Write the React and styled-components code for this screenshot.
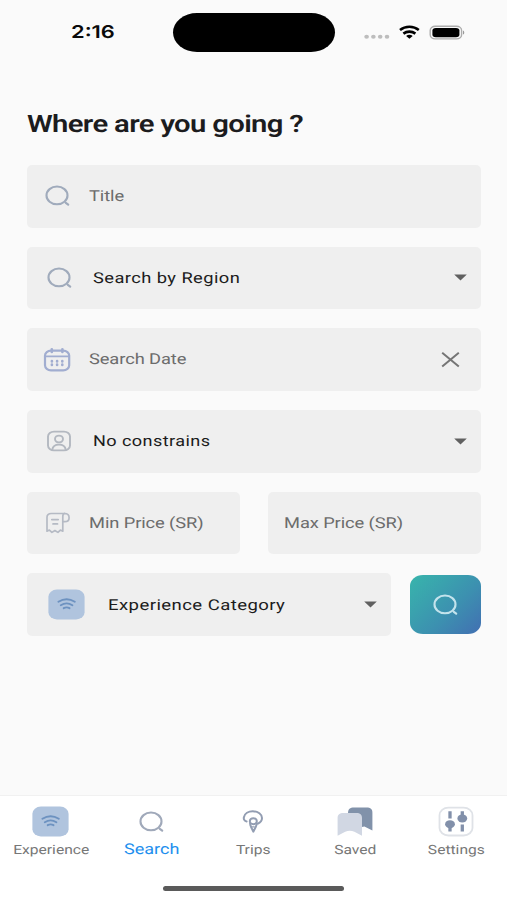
import styled, { createGlobalStyle } from "styled-components";

const GlobalStyle = createGlobalStyle`
  * {
    box-sizing: border-box;
  }
  body {
    margin: 0;
    background: #fafafa;
    font-family: Roboto, "Liberation Sans", sans-serif;
    text-rendering: geometricPrecision;
  }
`;

const Screen = styled.div`
  display: flex;
  flex-direction: column;
  width: 507px;
  height: 900px;
  overflow: hidden;
  background: #fafafa;
`;

const StatusBar = styled.header`
  display: grid;
  grid-template-columns: 173px 162px 1fr;
  height: 64px;
  padding-top: 12.5px;
`;

const Time = styled.div`
  padding-left: 71px;
  line-height: 39px;
  font-family: Inter, sans-serif;
  font-size: 17.5px;
  font-weight: 600;
  color: #0a0a0a;
`;

const Island = styled.div`
  height: 39px;
  border-radius: 24px / 19.5px;
  background: #000;
`;

const StatusIcons = styled.div`
  display: flex;
  padding: 11px 0 0 28px;
`;

const Stretch = styled.span`
  display: inline-block;
  white-space: nowrap;
  transform: scaleX(${(props) => props.$x || 1.22});
  transform-origin: ${(props) => (props.$center ? "center" : "left")};
`;

const Main = styled.main`
  flex: 1;
  padding: 0 26px 0 27px;
`;

const Heading = styled.h1`
  margin: 45px 0 25px;
  height: 31px;
  line-height: 31px;
  font-size: 24px;
  font-weight: 600;
  letter-spacing: -0.55px;
  color: #1c1c1e;
`;

const Form = styled.form`
  display: flex;
  flex-direction: column;
  gap: 19.2px;
`;

const Row = styled.div`
  display: grid;
  grid-template-columns: ${(props) => props.$columns};
  column-gap: ${(props) => props.$gap};
  align-items: center;
`;

const Field = styled.div`
  display: flex;
  align-items: center;
  height: 62.5px;
  padding: 0 ${(props) => props.$end || "14px"} 0 ${(props) => props.$start || "16px"};
  border-radius: 5px;
  background: #efefef;
  font-size: 15px;
  letter-spacing: ${(props) => (props.$dark ? "0.35px" : "-0.08px")};
  color: ${(props) => (props.$dark ? "#1c1c1c" : "#6c6c6c")};
  svg {
    flex: none;
  }
`;

const IconSlot = styled.span`
  display: flex;
  flex: none;
  width: ${(props) => props.$width || "46px"};
`;

const Value = styled.span`
  flex: 1;
  min-width: 0;
  line-height: 20px;
  padding-bottom: ${(props) => props.$lift || "1px"};
`;

const SearchButton = styled.button`
  display: flex;
  align-items: center;
  justify-content: center;
  height: 58.5px;
  padding: 0;
  border: 0;
  border-radius: 13px / 11px;
  background: linear-gradient(135deg, #38b2ac 5%, #3c91b0 58%, #426fb2 100%);
`;

const Nav = styled.nav`
  display: grid;
  grid-template-columns: repeat(5, 1fr);
  height: 83px;
  padding-top: 10px;
  border-top: 1px solid #f1f1f1;
  background: #fff;
`;

const Tab = styled.div`
  display: flex;
  flex-direction: column;
  align-items: center;
  font-size: ${(props) => (props.$active ? "14.8px" : "12.8px")};
  line-height: 18px;
  color: ${(props) => (props.$active ? "#1e8fee" : "#777")};
`;

const TabIcon = styled.div`
  display: flex;
  align-items: center;
  height: 31px;
  margin-bottom: ${(props) => (props.$active ? "3px" : "5px")};
`;

const HomeArea = styled.div`
  height: 22px;
  padding-top: 8px;
  background: #fff;
`;

const HomeIndicator = styled.div`
  width: 181px;
  height: 5px;
  margin: 0 auto;
  border-radius: 3px;
  background: #5a5a5a;
`;

const SearchIcon = ({ color = "#a0abbc" }) => (
  <svg width="26" height="22" viewBox="0 0 26 22" fill="none" stroke={color}>
    <ellipse cx="12" cy="10.4" rx="10.5" ry="8.9" strokeWidth="2.1" />
    <path d="M20.8 17.8l2.4 1.8" strokeWidth="2.2" strokeLinecap="round" />
  </svg>
);

const CalendarIcon = () => (
  <svg width="28" height="24" viewBox="0 0 28 24" fill="none" stroke="#a1add0" strokeLinecap="round">
    <rect x="2" y="2.6" width="24.2" height="19.7" rx="6" ry="5" strokeWidth="2.2" />
    <path d="M2.8 8.3h22.6" strokeWidth="1.8" />
    <path d="M8.8 1.3v2.6M19.4 1.3v2.6" strokeWidth="2.6" />
    <path d="M8.9 13.4v-.4M14.1 13.4v-.4M19.3 13.4v-.4M8.9 17v-.4M14.1 17v-.4M19.3 17v-.4" strokeWidth="2.6" />
  </svg>
);

const PersonIcon = () => (
  <svg width="26" height="22" viewBox="0 0 26 22" fill="none" stroke="#b3b8c0" strokeWidth="1.9">
    <rect x="2" y="1.6" width="22" height="18.8" rx="6" ry="5" />
    <ellipse cx="13" cy="9" rx="4" ry="3.4" />
    <path d="M6.2 19.8c.6-3.5 3.3-5.2 6.8-5.2s6.2 1.7 6.8 5.2" />
  </svg>
);

const ReceiptIcon = () => (
  <svg width="26" height="22" viewBox="0 0 26 22" fill="none" stroke="#b5bac4" strokeWidth="1.7" strokeLinejoin="round" strokeLinecap="round">
    <path d="M19.5 1.5H6.3C3.4 1.5 2 3 2 5.2v14l2.4-1.1 2.5 2.3 3-1.9 3 1.9 2.5-2.3 2.4 1.1V4.5c0-1.9.7-3 2-3" />
    <path d="M19.5 1.5c3 0 4.6 1.5 4.6 4.2 0 2.6-1.6 4-4.3 4h-2" />
    <path d="M6.8 7.6h6.4M8 11.9h4.5" />
  </svg>
);

const WifiBadge = () => (
  <svg width="37" height="31" viewBox="0 0 37 31" fill="none">
    <rect x=".4" y=".6" width="36.2" height="29.8" rx="8.5" ry="7.2" fill="#b0c4de" />
    <g stroke="#6d92c0" strokeWidth="1.9" strokeLinecap="round">
      <path d="M10.4 12.8c5-3.2 11.4-3.2 16.4 0" />
      <path d="M12.8 16.2c3.6-2.3 8-2.3 11.6 0" />
      <path d="M15.7 19.2c1.8-1 4-1 5.8 0" />
    </g>
  </svg>
);

const Caret = () => (
  <svg width="13" height="7" viewBox="0 0 13 7">
    <path d="M.2.5h12.6L6.5 6.4z" fill="#606060" />
  </svg>
);

const CloseIcon = () => (
  <svg width="19" height="16" viewBox="0 0 19 16" stroke="#757575" strokeWidth="2">
    <path d="M1.2 .8l16.6 13.8M17.8 .8L1.2 14.6" />
  </svg>
);

const TripsIcon = () => (
  <svg width="22" height="26" viewBox="0 0 22 26" fill="none" stroke="#929db2" strokeWidth="2" strokeLinecap="round" strokeLinejoin="round">
    <path d="M4.6 12.4C1.8 11.9 1.6 9.6 1.9 8.2 2.7 4.6 6.4 2.3 10.8 2.3c5.3 0 9.2 3 9.2 6.8 0 2.4-1.5 4.4-4 5.6" />
    <ellipse cx="11.3" cy="12.2" rx="3.5" ry="3" />
    <path d="M8.1 14.2c0 1.5.4 2.5 1 3.8l2.2 4.7 2.4-4.7c.7-1.3 1-2.3 1-3.8" />
    <path d="M10.3 17.9h2" strokeWidth="1.2" />
  </svg>
);

const SavedIcon = () => (
  <svg width="36" height="30" viewBox="0 0 36 30">
    <path d="M11 6C11 2.2 13 .5 17 .5h12.5C33.6.5 35.4 2 35.4 5.5v18l-8-4-10 2z" fill="#8192aa" />
    <path d="M.6 11C.6 7.5 2.6 6 6.4 6h13c3.8 0 5.6 1.6 5.6 5v17.8l-7.6-4q-4.6-1.9-9.2 0l-7.6 4z" fill="#d1d7e3" />
  </svg>
);

const SettingsIcon = () => (
  <svg width="36" height="31" viewBox="0 0 36 31" fill="none">
    <rect x="1.5" y="1.7" width="33" height="27.8" rx="9" ry="7.5" stroke="#dfe2e7" strokeWidth="1.8" />
    <g stroke="#8290aa" strokeWidth="3.3">
      <path d="M12 5.2v7.2M12 19.5v6M24.3 5.2v8M24.3 18.5v7" />
    </g>
    <ellipse cx="12" cy="18.2" rx="4.9" ry="4" fill="#8290aa" />
    <ellipse cx="24.3" cy="12.4" rx="4.9" ry="4" fill="#8290aa" />
  </svg>
);

const StatusGlyphs = () => (
  <svg width="106" height="18" viewBox="0 0 106 18" fill="none">
    <g fill="#bdbdbd">
      <ellipse cx="3.6" cy="12.8" rx="2.3" ry="2" />
      <ellipse cx="10.4" cy="12.8" rx="2.3" ry="2" />
      <ellipse cx="17.2" cy="12.8" rx="2.3" ry="2" />
      <ellipse cx="24" cy="12.8" rx="2.3" ry="2" />
    </g>
    <g stroke="#000" strokeWidth="2.6">
      <path d="M37 6c5.3-4.3 13.5-4.3 18.8 0" />
      <path d="M40.4 9.6c3.5-2.7 8.5-2.7 12 0" />
    </g>
    <path d="M43.1 11.9c2-1.4 4.6-1.4 6.6 0l-3.3 2.9z" fill="#000" />
    <rect x="67.2" y="2.3" width="31.4" height="12.6" rx="5" ry="4.1" stroke="#acacac" strokeWidth="1.4" />
    <rect x="69.4" y="3.9" width="27" height="9.4" rx="3.4" ry="2.7" fill="#000" />
    <path d="M100 6.4c1.7.6 1.7 3.6 0 4.2z" fill="#999" />
  </svg>
);

const tabs = [
  { label: "Experience", icon: <WifiBadge /> },
  { label: "Search", icon: <SearchIcon color="#a0a9ba" />, active: true },
  { label: "Trips", icon: <TripsIcon /> },
  { label: "Saved", icon: <SavedIcon /> },
  { label: "Settings", icon: <SettingsIcon /> },
];

const App = () => (
  <>
    <GlobalStyle />
    <Screen>
      <StatusBar>
        <Time>
          <Stretch $x={1.25}>2:16</Stretch>
        </Time>
        <Island />
        <StatusIcons>
          <StatusGlyphs />
        </StatusIcons>
      </StatusBar>
      <Main>
        <Heading>
          <Stretch>Where are you going ?</Stretch>
        </Heading>
        <Form>
          <Field $start="18px">
            <IconSlot $width="44px">
              <SearchIcon />
            </IconSlot>
            <Value>
              <Stretch>Title</Stretch>
            </Value>
          </Field>
          <Field $start="19.5px" $dark>
            <IconSlot>
              <SearchIcon />
            </IconSlot>
            <Value $lift="0">
              <Stretch>Search by Region</Stretch>
            </Value>
            <Caret />
          </Field>
          <Field $start="16px" $end="21px">
            <IconSlot $width="45.5px">
              <CalendarIcon />
            </IconSlot>
            <Value>
              <Stretch>Search Date</Stretch>
            </Value>
            <CloseIcon />
          </Field>
          <Field $start="19px" $dark>
            <IconSlot $width="46.5px">
              <PersonIcon />
            </IconSlot>
            <Value>
              <Stretch $x={1.205}>No constrains</Stretch>
            </Value>
            <Caret />
          </Field>
          <Row $columns="1fr 1fr" $gap="28.5px">
            <Field $start="17.5px">
              <IconSlot $width="44px">
                <ReceiptIcon />
              </IconSlot>
              <Value>
                <Stretch>Min Price (SR)</Stretch>
              </Value>
            </Field>
            <Field $start="15.5px">
              <Value>
                <Stretch>Max Price (SR)</Stretch>
              </Value>
            </Field>
          </Row>
          <Row $columns="364px 1fr" $gap="19px">
            <Field $start="21px" $dark>
              <IconSlot $width="60px">
                <WifiBadge />
              </IconSlot>
              <Value $lift="0">
                <Stretch $x={1.235}>Experience Category</Stretch>
              </Value>
              <Caret />
            </Field>
            <SearchButton type="button" aria-label="Search">
              <SearchIcon color="#c3e3ec" />
            </SearchButton>
          </Row>
        </Form>
      </Main>
      <Nav>
        {tabs.map((tab) => (
          <Tab key={tab.label} $active={tab.active}>
            <TabIcon $active={tab.active}>{tab.icon}</TabIcon>
            <Stretch $center>{tab.label}</Stretch>
          </Tab>
        ))}
      </Nav>
      <HomeArea>
        <HomeIndicator />
      </HomeArea>
    </Screen>
  </>
);

export default App;
